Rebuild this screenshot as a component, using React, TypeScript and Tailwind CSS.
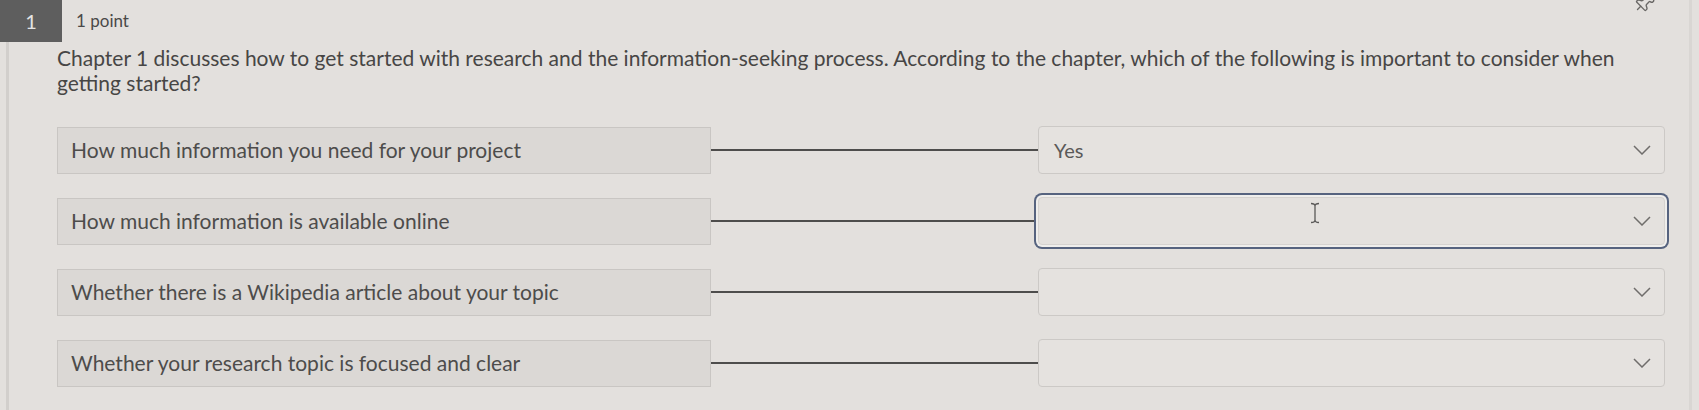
import { Pin } from "lucide-react";

const choices = [
  { label: "How much information you need for your project", answer: "Yes", focused: false },
  { label: "How much information is available online", answer: "", focused: true },
  { label: "Whether there is a Wikipedia article about your topic", answer: "", focused: false },
  { label: "Whether your research topic is focused and clear", answer: "", focused: false },
];

const Chevron = () => (
  <svg width="18" height="10" viewBox="0 0 18 10" fill="none">
    <polyline points="1,1 9,9 17,1" stroke="#6f6d6b" strokeWidth="1.5" />
  </svg>
);

const App = () => {
  return (
    <div
      className="min-h-screen w-full bg-[#e3e0dd] text-[#474645]"
      style={{ fontFamily: "Lato, 'Open Sans', sans-serif" }}
    >
      <div className="w-[1692px] min-h-[410px] border-r-[3px] border-[#d9d6d3]">
        {/* Header */}
        <div className="flex items-center h-[42px]">
          <div className="w-[62px] h-[42px] bg-[#5e5e5e] text-[#e4e4e4] text-[20px] flex items-center justify-center">
            1
          </div>
          <div className="ml-[14px] text-[17px] text-[#4a4948]">1 point</div>
          <div className="flex-1" />
          <div className="mr-[34px] -mt-[36px] text-[#6a6866]">
            <Pin size={22} strokeWidth={1.5} className="rotate-45" />
          </div>
        </div>

        {/* Question body */}
        <div className="ml-[6px] border-l-[3px] border-[#d2cfcc] pl-[48px] pt-[3px] pb-[24px]">
          <p className="w-[1562px] text-[21px] leading-[25px] text-[#474645]">
            Chapter 1 discusses how to get started with research and the information-seeking process. According to the
            chapter, which of the following is important to consider when getting started?
          </p>

          <div className="mt-[31px] flex flex-col gap-[23px]">
            {choices.map((c) => (
              <div key={c.label} className="flex items-center h-[48px]">
                <div className="w-[654px] h-[47px] bg-[#dbd8d5] border border-[#c9c6c3] flex items-center pl-[13px] text-[21px] text-[#4d4c4b]">
                  {c.label}
                </div>
                <div className="w-[327px] h-[2px] bg-[#4e4d4c]" />
                <div
                  className={`relative w-[627px] h-[48px] flex items-center justify-between pl-[15px] pr-[13px] text-[20px] text-[#5a5958] border rounded-[4px] ${
                    c.focused
                      ? "border-[#d6d3d0] shadow-[0_0_0_2px_#efeeec,0_0_0_4px_#56637f] bg-[#e4e1de]"
                      : "border-[#ccc9c6] bg-[#e5e2df]"
                  }`}
                >
                  <span>{c.answer}</span>
                  <Chevron />
                  {c.focused && (
                    <svg
                      className="absolute left-[270px] top-[4px]"
                      width="12"
                      height="22"
                      viewBox="0 0 12 22"
                      fill="none"
                    >
                      <path
                        d="M2 1.5 Q6 1.5 6 4 Q6 1.5 10 1.5 M6 4 V18 M2 20.5 Q6 20.5 6 18 Q6 20.5 10 20.5"
                        stroke="#5a5958"
                        strokeWidth="1.3"
                      />
                    </svg>
                  )}
                </div>
              </div>
            ))}
          </div>
        </div>
      </div>
    </div>
  );
};

export default App;
